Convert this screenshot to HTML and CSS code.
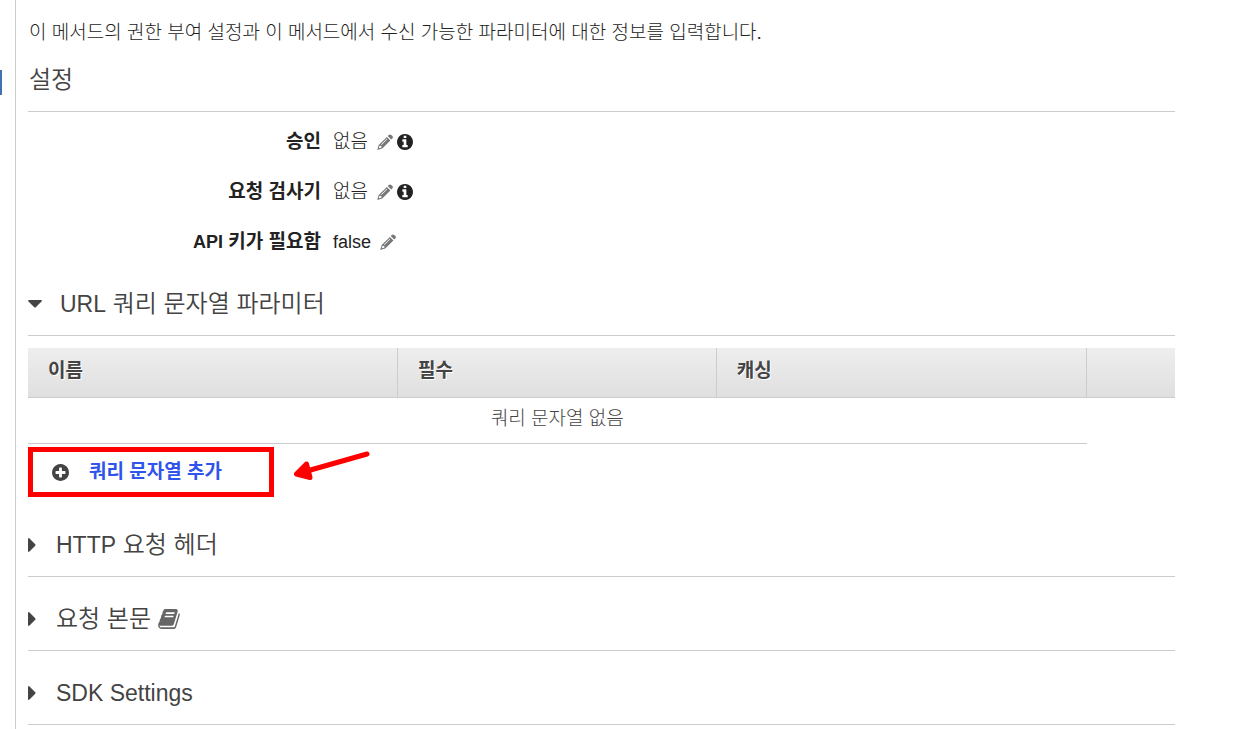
FILE: index.html
```
<!DOCTYPE html>
<html lang="ko">
<head>
<meta charset="utf-8">
<meta name="viewport" content="width=device-width, initial-scale=1">
<title>메서드 요청</title>
<link rel="stylesheet" href="styles.css">
</head>
<body>
<svg class="sprite" aria-hidden="true">
  <symbol id="pencil" viewBox="0 0 16 16">
    <path d="M11.700 1.100Q13-.2 14.200.9L15.400 2.100Q16.500 3.300 15.200 4.600L14.200 5.600 10.700 2.100Z"/>
    <path fill-rule="evenodd" d="M9.900 2.900L13.400 6.400 5.300 14.400.2 15.900 1.700 10.900ZM2.600 11.700L1.800 13.700 2.500 14.300 4.500 13.500 4.300 11.900ZM9.700 4.700L4 10.400 4.500 10.900 10.200 5.200Z"/>
  </symbol>
  <symbol id="info" viewBox="128 128 1536 1536">
    <path d="M1152 1376v-160q0-14-9-23t-23-9h-96v-512q0-14-9-23t-23-9h-320q-14 0-23 9t-9 23v160q0 14 9 23t23 9h96v320h-96q-14 0-23 9t-9 23v160q0 14 9 23t23 9h448q14 0 23-9t9-23zm-128-896v-160q0-14-9-23t-23-9h-192q-14 0-23 9t-9 23v160q0 14 9 23t23 9h192q14 0 23-9t9-23zm640 416q0 209-103 385.500t-279.500 279.500-385.500 103-385.500-103-279.500-279.500-103-385.500 103-385.500 279.500-279.500 385.500-103 385.500 103 279.500 279.500 103 385.500z"/>
  </symbol>
</svg>
<div class="layout">
  <div class="rail"><div class="rail-mark"></div></div>
  <main class="content">
    <p class="intro">이 메서드의 권한 부여 설정과 이 메서드에서 수신 가능한 파라미터에 대한 정보를 입력합니다.</p>

    <h2 class="title title-settings">설정</h2>
    <dl class="settings">
      <div class="setting">
        <dt>승인</dt>
        <dd>없음 <span class="tools"><button class="icon-button" aria-label="승인 편집"><svg class="pencil"><use href="#pencil"/></svg></button><button class="icon-button" aria-label="승인 정보"><svg class="info"><use href="#info"/></svg></button></span></dd>
      </div>
      <div class="setting">
        <dt>요청 검사기</dt>
        <dd>없음 <span class="tools"><button class="icon-button" aria-label="요청 검사기 편집"><svg class="pencil"><use href="#pencil"/></svg></button><button class="icon-button" aria-label="요청 검사기 정보"><svg class="info"><use href="#info"/></svg></button></span></dd>
      </div>
      <div class="setting">
        <dt><span class="latin">API</span> 키가 필요함</dt>
        <dd><span class="latin">false</span> <span class="tools"><button class="icon-button" aria-label="API 키 편집"><svg class="pencil"><use href="#pencil"/></svg></button></span></dd>
      </div>
    </dl>

    <h2 class="title title-open"><button class="toggle" aria-expanded="true"><svg class="caret-down" viewBox="0 0 14 8"><path d="M1 0H13Q14.500.3 13.500 1.500L8 7Q7 8 6 7L.5 1.500Q-.5.3 1 0Z"/></svg><span><span class="title-latin">URL</span> 쿼리 문자열 파라미터</span></button></h2>
    <table class="params">
      <thead>
        <tr><th class="col-name" scope="col">이름</th><th class="col-required" scope="col">필수</th><th class="col-cache" scope="col">캐싱</th><th class="col-actions"></th></tr>
      </thead>
      <tbody>
        <tr><td class="empty" colspan="3">쿼리 문자열 없음</td><td></td></tr>
      </tbody>
    </table>
    <div class="add-row">
      <button class="add">
        <svg class="plus" viewBox="128 128 1536 1536"><path d="M1344 960v-128q0-26-19-45t-45-19h-256v-256q0-26-19-45t-45-19h-128q-26 0-45 19t-19 45v256h-256q-26 0-45 19t-19 45v128q0 26 19 45t45 19h256v256q0 26 19 45t45 19h128q26 0 45-19t19-45v-256h256q26 0 45-19t19-45zm320-64q0 209-103 385.500t-279.500 279.500-385.500 103-385.500-103-279.500-279.500-103-385.500 103-385.500 279.500-279.500 385.500-103 385.500 103 279.500 279.500 103 385.500z"/></svg>
        쿼리 문자열 추가
      </button>
      <svg class="arrow" viewBox="0 0 76 30" aria-hidden="true"><path d="M73 3L13 20M12.500 13L2.500 23 16 26.500Z"/></svg>
    </div>

    <h2 class="title title-closed"><button class="toggle" aria-expanded="false"><svg class="caret-right" viewBox="0 0 8 14"><path d="M0 1Q.3-.5 1.500.5L7 6Q8 7 7 8L1.500 13.500Q.3 14.500 0 13Z"/></svg><span><span class="title-latin">HTTP</span> 요청 헤더</span></button></h2>
    <h2 class="title title-closed"><button class="toggle" aria-expanded="false"><svg class="caret-right" viewBox="0 0 8 14"><path d="M0 1Q.3-.5 1.500.5L7 6Q8 7 7 8L1.500 13.500Q.3 14.500 0 13Z"/></svg>요청 본문<svg class="book" viewBox="64 128 1664 1536"><path d="M1703 478q40 57 18 129l-275 906q-19 64-76.500 107.500t-122.500 43.500h-923q-77 0-148.500-53.500t-99.500-131.500q-24-67-2-127 0-4 3-27t4-37q1-8-3-21.500t-3-19.500q2-11 8-21t16.500-23.500 16.500-23.500q23-38 45-91.500t30-91.500q3-10 .5-30t-.5-28q3-11 17-28t17-23q21-36 42-92t25-90q1-9-2.500-32t.5-28q4-13 22-30.500t22-22.500q19-26 42.500-84.500t27.500-96.500q1-8-3-25.500t-2-26.500q2-8 9-18t18-23 17-21q8-12 16.500-30.500t15-35 16-36 19.500-32 26.500-23.500 36-11.500 47.500 5.500l-1 3q38-9 51-9h761q74 0 114 56t18 130l-274 906q-36 119-71.500 153.500t-128.500 34.500h-869q-27 0-38 15-11 16-1 43 24 70 144 70h923q29 0 56-15.500t35-41.500l300-987q7-22 5-57 38 15 59 43zm-1064 2q-4 13 2 22.500t20 9.500h608q13 0 25.500-9.500t16.500-22.500l21-64q4-13-2-22.500t-20-9.500h-608q-13 0-25.500 9.500t-16.500 22.500zm-83 256q-4 13 2 22.500t20 9.500h608q13 0 25.500-9.500t16.500-22.500l21-64q4-13-2-22.500t-20-9.500h-608q-13 0-25.500 9.500t-16.500 22.500z"/></svg></button></h2>
    <h2 class="title title-closed"><button class="toggle" aria-expanded="false"><svg class="caret-right" viewBox="0 0 8 14"><path d="M0 1Q.3-.5 1.500.5L7 6Q8 7 7 8L1.500 13.500Q.3 14.500 0 13Z"/></svg><span class="title-latin">SDK Settings</span></button></h2>
  </main>
</div>
</body>
</html>
```
FILE: styles.css
```
* { box-sizing: border-box; }
body {
  margin: 0;
  background: #fff;
  color: #222;
  font: 300 19px/24px "Liberation Sans", "Noto Sans CJK KR", sans-serif;
}
button {
  margin: 0;
  padding: 0;
  border: 0;
  background: none;
  color: inherit;
  font: inherit;
  cursor: pointer;
}
svg { fill: currentColor; flex: none; }
.sprite { position: absolute; width: 0; height: 0; }
.layout { display: flex; min-height: 100vh; }
.rail { width: 15px; padding-top: 70px; flex: none; }
.rail-mark { width: 2px; height: 25px; background: #4271ae; }
.content {
  flex: 1;
  min-width: 0;
  padding: 21px 76px 0 12px;
  border-left: 1px solid #ccc;
}
.intro { margin: 0; padding-left: 1px; }
.latin { font-size: 18px; }
.title {
  display: flex;
  align-items: center;
  margin: 0;
  border-bottom: 1px solid #ccc;
  color: #444;
  font-size: 24px;
  line-height: 32px;
  font-weight: 350;
}
.title-latin { font-size: 23px; }
.title-settings { padding: 19px 0 15px 1px; }
.title-open { padding: 18px 0 15px; }
.title-closed { padding: 26px 0 15px; }
.toggle { display: flex; align-items: center; text-align: left; }
.caret-down { width: 14px; height: 8px; margin-right: 18px; }
.caret-right { width: 8px; height: 14px; margin-right: 20px; }
.book { width: 22px; height: 20px; margin-left: 7px; color: #666; }

.settings { margin: 0; padding: 5px 0 3px; }
.setting { display: flex; align-items: center; gap: 12px; height: 50px; }
.setting dt { width: 293px; text-align: right; font-weight: 700; }
.setting dd { display: flex; align-items: center; gap: 9px; margin: 0; }
.tools { display: flex; align-items: center; gap: 4px; }
.icon-button { display: flex; }
.pencil { width: 16px; height: 16px; color: #777; }
.info { width: 16px; height: 16px; color: #222; }

.params {
  width: 100%;
  margin-top: 12px;
  border-collapse: separate;
  border-spacing: 0;
  table-layout: fixed;
  color: #444;
}
.params thead { background: linear-gradient(#eee, #dfdfdf); }
.params th {
  height: 50px;
  padding: 0 20px 4px;
  border-right: 1px solid #ccc;
  border-bottom: 1px solid #ccc;
  text-align: left;
  text-shadow: 1px 1px 0 #fff;
}
.params th:last-child { border-right: 0; }
.col-name, .col-cache { width: 32.25%; }
.col-required { width: 27.8%; }
.params .empty {
  height: 46px;
  padding: 0 0 4px;
  border-bottom: 1px solid #ccc;
  text-align: center;
}
.add-row { display: flex; align-items: flex-start; gap: 20px; margin: 3px 0 6px; }
.add {
  display: flex;
  align-items: center;
  gap: 20px;
  width: 246px;
  height: 50px;
  padding-left: 19px;
  border: 5px solid #f00;
  color: #2f54eb;
  font-weight: 700;
}
.plus { width: 17px; height: 17px; color: #444; }
.arrow {
  width: 76px;
  height: 30px;
  margin-top: 4px;
  fill: #f00;
  stroke: #f00;
  stroke-width: 5;
  stroke-linecap: round;
  stroke-linejoin: round;
}
```
